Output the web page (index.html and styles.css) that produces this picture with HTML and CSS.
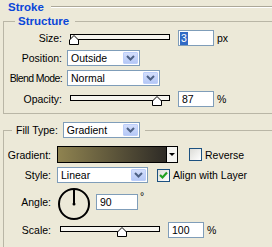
FILE: index.html
```html
<!DOCTYPE html>
<html lang="en">
<head>
  <meta charset="UTF-8">
  <title>Stroke</title>
  <link rel="stylesheet" href="styles.css">
</head>
<body>
  <div class="panel">
    <div class="section-title"><span>Stroke</span></div>

    <fieldset class="group structure">
      <legend class="group-title">Structure</legend>

      <div class="row">
        <span class="lbl">Size:</span>
        <div class="slider">
          <div class="track"></div>
          <svg class="thumb" style="left: 3.5%" width="10" height="10" viewBox="0 0 10 10"><path d="M5 0.5 L9.5 5 L9.5 9.5 L0.5 9.5 L0.5 5 Z" fill="#fff" stroke="#000"/></svg>
        </div>
        <div class="num"><span class="picked">3</span></div>
        <span class="unit">px</span>
      </div>

      <div class="row">
        <span class="lbl">Position:</span>
        <div class="select select-position">
          <span class="select-text">Outside</span>
          <span class="select-btn"><svg width="9" height="6" viewBox="0 0 9 6"><path d="M1 1 L4.5 4.5 L8 1" fill="none" stroke="#4d6185" stroke-width="2"/></svg></span>
        </div>
      </div>

      <div class="row">
        <span class="lbl lbl-tight">Blend Mode:</span>
        <div class="select select-blend">
          <span class="select-text">Normal</span>
          <span class="select-btn"><svg width="9" height="6" viewBox="0 0 9 6"><path d="M1 1 L4.5 4.5 L8 1" fill="none" stroke="#4d6185" stroke-width="2"/></svg></span>
        </div>
      </div>

      <div class="row row-last">
        <span class="lbl">Opacity:</span>
        <div class="slider">
          <div class="track"></div>
          <svg class="thumb" style="left: 87%" width="10" height="10" viewBox="0 0 10 10"><path d="M5 0.5 L9.5 5 L9.5 9.5 L0.5 9.5 L0.5 5 Z" fill="#fff" stroke="#000"/></svg>
        </div>
        <div class="num">87</div>
        <span class="unit">%</span>
      </div>
    </fieldset>

    <fieldset class="group fill">
      <legend class="fill-legend">
        <span>Fill Type:</span>
        <div class="select select-fill">
          <span class="select-text">Gradient</span>
          <span class="select-btn"><svg width="9" height="6" viewBox="0 0 9 6"><path d="M1 1 L4.5 4.5 L8 1" fill="none" stroke="#4d6185" stroke-width="2"/></svg></span>
        </div>
      </legend>

      <div class="row row-gradient">
        <span class="lbl lbl-fill">Gradient:</span>
        <div class="swatch">
          <div class="ramp"></div>
          <div class="ramp-btn"><span class="tri"></span></div>
        </div>
        <span class="check check-reverse"></span>
        <span class="check-text">Reverse</span>
      </div>

      <div class="row row-style">
        <span class="lbl lbl-fill">Style:</span>
        <div class="select select-style">
          <span class="select-text">Linear</span>
          <span class="select-btn"><svg width="9" height="6" viewBox="0 0 9 6"><path d="M1 1 L4.5 4.5 L8 1" fill="none" stroke="#4d6185" stroke-width="2"/></svg></span>
        </div>
        <span class="check check-align"><svg width="11" height="11" viewBox="0 0 11 11"><path d="M2 5 L4.5 7.5 L9 2.5" fill="none" stroke="#21a121" stroke-width="2.2"/></svg></span>
        <span class="check-text">Align with Layer</span>
      </div>

      <div class="row row-angle">
        <span class="lbl lbl-fill">Angle:</span>
        <svg class="dial" width="32" height="32" viewBox="0 0 32 32">
          <circle cx="16" cy="16" r="15" fill="none" stroke="#000" stroke-width="2"/>
          <line x1="16" y1="16" x2="16" y2="2" stroke="#000" stroke-width="2"/>
          <circle cx="16" cy="16" r="1.5" fill="#000"/>
        </svg>
        <div class="num num-angle">90</div>
        <span class="deg">°</span>
      </div>

      <div class="row row-scale">
        <span class="lbl lbl-fill">Scale:</span>
        <div class="slider">
          <div class="track"></div>
          <svg class="thumb" style="left: 62%" width="10" height="10" viewBox="0 0 10 10"><path d="M5 0.5 L9.5 5 L9.5 9.5 L0.5 9.5 L0.5 5 Z" fill="#fff" stroke="#000"/></svg>
        </div>
        <div class="num">100</div>
        <span class="unit">%</span>
      </div>
    </fieldset>
  </div>
</body>
</html>
```

FILE: styles.css
```css
* {
  box-sizing: border-box;
}

body {
  margin: 0;
  width: 272px;
  height: 247px;
  overflow: hidden;
  background: #ece9d8;
  font-family: "Liberation Sans", Arial, sans-serif;
  font-size: 10.5px;
  color: #000;
}

.section-title {
  display: flex;
  align-items: center;
  height: 13px;
  padding-left: 8px;
  color: #0a46d8;
  font-weight: bold;
  font-size: 11.5px;
}

.section-title::after {
  content: "";
  flex: 1;
  margin-left: 7px;
  border-top: 1px solid #aca899;
  box-shadow: 0 1px 0 #fff;
}

.group {
  margin: 1px 0 0 3px;
  padding: 0 0 6px 0;
  min-width: 0;
  border: 1px solid #b9b6a6;
  border-right: none;
}

.group-title {
  margin-left: 11px;
  padding: 0 6px 0 3px;
  line-height: 14px;
  color: #0a46d8;
  font-weight: bold;
  font-size: 11.5px;
}

.fill {
  margin-top: 8px;
  padding-bottom: 30px;
  border-bottom: none;
}

.fill-legend {
  display: flex;
  align-items: center;
  gap: 5px;
  margin-left: 8px;
  padding: 0 5px 0 4px;
}

.row {
  display: flex;
  align-items: center;
  height: 16px;
  margin-top: 4px;
}

.structure .row:first-of-type {
  margin-top: 2px;
}

.row-last {
  margin-top: 5px;
}

.lbl {
  flex-shrink: 0;
  width: 58px;
  margin-right: 5px;
  text-align: right;
  white-space: nowrap;
}

.lbl-tight {
  letter-spacing: -0.6px;
}

.lbl-fill {
  width: 47px;
  margin-right: 6px;
}

/* slider */
.slider {
  position: relative;
  align-self: flex-start;
  width: 100px;
  height: 16px;
  margin-left: 3px;
}

.track {
  height: 6px;
  margin-top: 4px;
  border: 1px solid #000;
  background: #f6f5ef;
}

.thumb {
  position: absolute;
  top: 5px;
  transform: translateX(-50%);
}

.num {
  width: 36px;
  height: 16px;
  margin-left: 8px;
  padding-left: 3px;
  border: 1px solid #7f9db9;
  background: #fff;
  line-height: 14px;
}

.picked {
  display: inline-block;
  height: 13px;
  margin-left: -2px;
  padding: 0 1px;
  background: #316ac5;
  color: #fff;
  line-height: 13px;
}

.unit {
  margin-left: 3px;
}

/* dropdowns */
.select {
  display: flex;
  align-items: stretch;
  height: 16px;
  border: 1px solid #7f9db9;
  background: #fff;
}

.select-text {
  flex: 1;
  padding-left: 3px;
  line-height: 14px;
}

.select-btn {
  display: flex;
  align-items: center;
  justify-content: center;
  width: 15px;
  margin: 1px;
  border: 1px solid #bccefa;
  border-radius: 1px;
  background: linear-gradient(#d3defc, #b5c8f6);
}

.select-position { width: 73px; }
.select-blend { width: 93px; }
.select-fill { width: 77px; }
.select-style { width: 91px; }

/* gradient picker */
.swatch {
  display: flex;
  width: 121px;
  height: 17px;
}

.ramp {
  flex: 1;
  border: 1px solid #000;
  background: linear-gradient(to right, #8f8350, #2e2b26);
}

.ramp-btn {
  display: flex;
  align-items: center;
  justify-content: center;
  width: 11px;
  border: 1px solid #000;
  border-left: none;
  background: #f4f4f0;
}

.tri {
  border-left: 3px solid transparent;
  border-right: 3px solid transparent;
  border-top: 3px solid #000;
}

.row-gradient {
  height: 17px;
  margin-top: 8px;
}

/* checkboxes */
.check {
  display: flex;
  align-items: center;
  justify-content: center;
  width: 13px;
  height: 13px;
  border: 1px solid #1c5180;
  background: linear-gradient(135deg, #dcdcd7, #fff);
}

.check-reverse { margin-left: 11px; }
.check-align { margin-left: 9px; }

.check-text {
  margin-left: 3px;
  white-space: nowrap;
}

.row-angle {
  align-items: flex-start;
  height: 32px;
  margin-top: 5px;
}

.row-angle .lbl {
  margin-top: 6px;
  line-height: 16px;
}

.dial {
  margin-left: 1px;
}

.num-angle {
  width: 42px;
  margin-top: 6px;
  margin-left: 6px;
}

.deg {
  margin-left: 2px;
  margin-top: 2px;
  color: #000;
  font-size: 10.5px;
  line-height: 12px;
}

.row-scale {
  margin-top: 2px;
}
```
